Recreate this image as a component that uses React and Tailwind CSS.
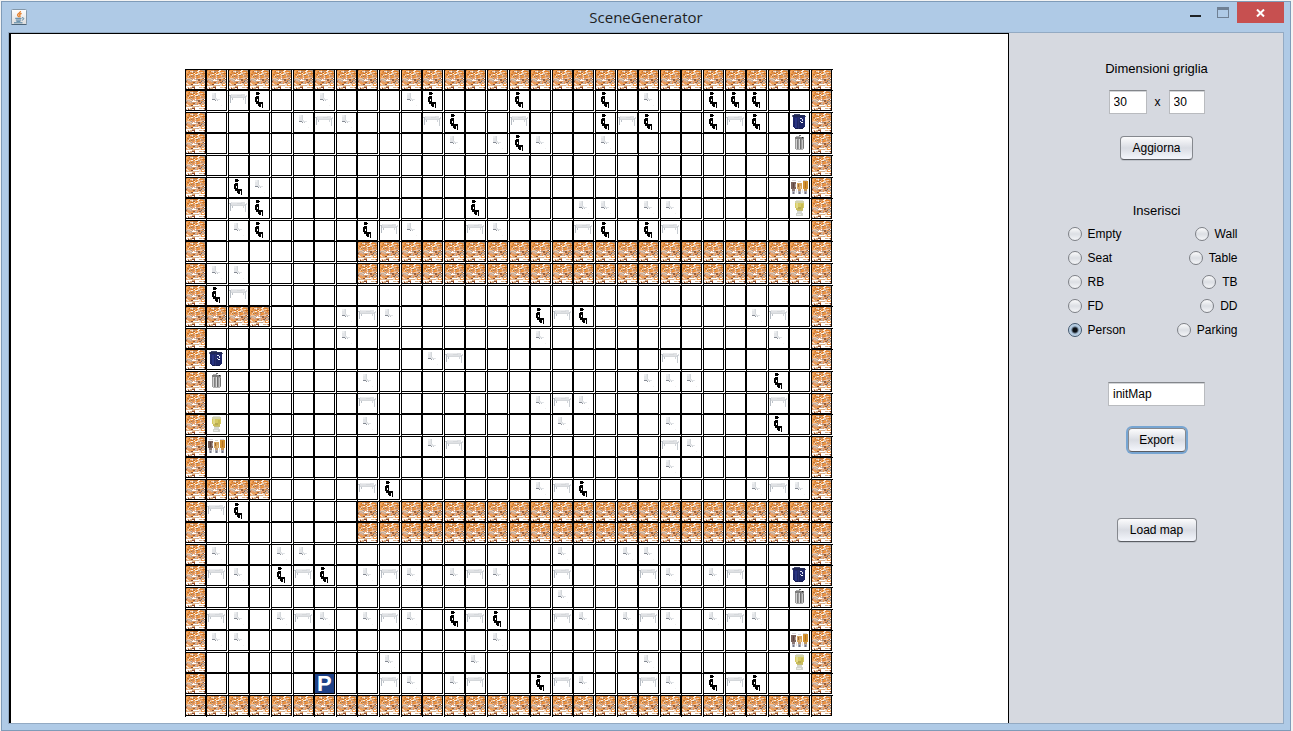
import React from "react";

const SIZE = 30;
const CELL = 21.6;

const tracks = Array.from({ length: SIZE }, (_, i) =>
  `${Math.floor((i + 1) * CELL + 0.001) - Math.floor(i * CELL + 0.001)}px`
).join(" ");

// Furniture per row: column number followed by the kind of tile.
const furniture = {
  1: "1s 2t 3p 6s 10s 11p 15p 19p 21s 24p 25p 26p",
  2: "5s 6t 7s 11t 12p 15t 19p 20t 21p 24p 25t 26p 28r",
  3: "12s 14s 15p 16s 19s 28b",
  5: "2p 3s 28f",
  6: "2t 3p 13p 18s 19s 21s 22s 28d",
  7: "2s 3p 8p 9t 10s 13t 14s 18t 19p 21p 22t",
  9: "1s 2s",
  10: "1p 2t",
  11: "7s 8t 9s 16p 17t 18p 26s 27t",
  12: "7s 16s 27s",
  13: "1r 11s 12t 22t",
  14: "1b 8s 21s 22s 23s 27p",
  15: "8t 16s 17t 18s 27t",
  16: "1d 8s 17s 22s 27p",
  17: "1f 11s 12t 22t 23s",
  18: "22s",
  19: "8t 9p 16s 17t 18p 26s 27t 28s",
  20: "1t 2p",
  22: "1s 4s 5s 17s 20s 21s",
  23: "1t 2s 4p 5t 6p 8s 9t 10s 12s 13t 14s 17t 21t 22s 24s 25t 28r",
  24: "17s 28b",
  25: "1t 2s 4s 5t 6s 8s 9t 10s 12p 13t 14p 17t 18s 20s 21t 22s 24s 25t 26s",
  26: "1s 2s 14s 28f",
  27: "9s 13s 21s 28d",
  28: "6P 9t 10s 12s 13t 16p 17t 18s 21t 22s 24p 25t 26p",
};

function isWall(row, col) {
  if (row === 0 || row === SIZE - 1 || col === 0 || col === SIZE - 1) return true;
  if ([8, 9, 20, 21].includes(row)) return col >= 8;
  if (row === 11 || row === 19) return col <= 3;
  return false;
}

const cells = [];
for (let row = 0; row < SIZE; row++) {
  const placed = {};
  (furniture[row] || "").split(" ").filter(Boolean).forEach((item) => {
    placed[parseInt(item, 10)] = item.slice(-1);
  });
  for (let col = 0; col < SIZE; col++) {
    cells.push(isWall(row, col) ? "w" : placed[col] || "");
  }
}

// Brick texture: short horizontal runs of colour from a fixed seed.
function brickPaths() {
  let state = 90210;
  const next = () => {
    state = (state + 0x6d2b79f5) | 0;
    let t = Math.imul(state ^ (state >>> 15), 1 | state);
    t = (t + Math.imul(t ^ (t >>> 7), 61 | t)) ^ t;
    return ((t ^ (t >>> 14)) >>> 0) / 4294967296;
  };
  const upper = ["#e8882f", "#f09a45", "#dd9358", "#c98a5c", "#b39a86", "#e8b48c", "#f3d3b5", "#c0722f", "#fbeee0", "#f0a868"];
  const middle = ["#e39a62", "#ee8f3c", "#c9a184", "#a89484", "#f2c9a8", "#ffffff", "#94603f", "#d8b79f", "#e9a070", "#c4b0a0"];
  const lower = ["#ee9346", "#ffffff", "#e4a477", "#d9b48f", "#fff4ea", "#8a4a32", "#f6d9be", "#f0a050", "#c9a890"];
  const groups = {};
  for (let y = 0; y < 19; y++) {
    const set = y < 8 ? upper : y < 13 ? middle : lower;
    let x = 0;
    while (x < 19) {
      const w = Math.min(19 - x, 1 + Math.floor(next() * 2.2));
      let fill = set[Math.floor(next() * set.length)];
      if (y === 16 || y === 18) fill = next() < 0.55 ? "#ffffff" : fill;
      groups[fill] = (groups[fill] || "") + `M${x} ${y}h${w}v1h-${w}z`;
      x += w;
    }
  }
  return Object.entries(groups);
}
const bricks = brickPaths();

// Each sprite is a list of [x, y, width, height, colour] blocks.
const sprites = {
  p: [
    [6, 1, 3, 3, "#000"], [9, 2, 1, 1, "#000"], [6, 5, 3, 2, "#000"], [5, 6, 2, 4, "#000"],
    [7, 7, 2, 1, "#000"], [8, 8, 1, 2, "#000"], [5, 10, 4, 1, "#000"], [6, 11, 4, 2, "#000"],
    [10, 11, 3, 1, "#000"], [8, 12, 5, 1, "#000"], [8, 13, 3, 2, "#000"], [12, 13, 1, 4, "#000"],
    [9, 15, 2, 1, "#000"],
  ],
  s: [
    [5, 2, 4, 6, "#e3e5e8"], [8, 2, 1, 6, "#d3d7da"], [5, 2, 2, 2, "#edeff0"], [6, 7, 4, 1, "#e1e3e6"],
    [5, 8, 3, 1, "#868b94"], [8, 8, 4, 1, "#dfe2e5"], [8, 9, 1, 1, "#92969d"], [10, 9, 1, 1, "#c5c9ce"],
    [12, 8, 1, 1, "#e3e5e8"], [14, 14, 1, 1, "#f0f0f0"],
  ],
  t: [
    [2, 3, 14, 3, "#dfe1e4"], [3, 3, 9, 1, "#ebecee"], [8, 4, 5, 1, "#d5d8db"], [1, 6, 16, 1, "#d4d7da"],
    [1, 4, 1, 8, "#b6bcc3"], [0, 4, 1, 1, "#c4c9ce"], [3, 7, 1, 2, "#bdc3ca"], [14, 7, 1, 2, "#d2d6db"],
    [16, 5, 1, 8, "#c8cdd2"], [17, 4, 1, 2, "#d8dade"],
  ],
  r: [
    [3, 2, 12, 2, "#202754"], [2, 2, 1, 2, "#676b86"], [15, 3, 1, 1, "#535874"], [4, 1, 6, 1, "#40466c"],
    [3, 4, 12, 4, "#20286e"], [3, 8, 12, 6, "#1c2566"], [4, 14, 10, 1, "#1c2566"], [5, 15, 8, 1, "#151c4d"],
    [5, 5, 2, 10, "#293483"], [10, 5, 2, 1, "#e4e8f4"], [12, 6, 1, 2, "#dce1f2"], [11, 9, 2, 1, "#fff"],
    [10, 8, 1, 1, "#d6dcef"], [8, 4, 1, 12, "#29316d"],
  ],
  b: [
    [5, 3, 9, 2, "#7c7c7c"], [6, 2, 4, 1, "#adadad"], [9, 1, 2, 1, "#686868"], [12, 3, 1, 1, "#222"],
    [5, 5, 9, 10, "#9a9a9a"], [6, 5, 1, 10, "#d2d2d2"], [7, 6, 1, 9, "#808080"], [9, 5, 1, 10, "#dadada"],
    [10, 5, 1, 10, "#6d6d6d"], [12, 6, 1, 9, "#c5c5c5"], [13, 6, 1, 8, "#757575"], [6, 15, 7, 1, "#b3b3b3"],
  ],
  f: [
    [2, 2, 4, 1, "#d7d4d7"], [8, 3, 3, 1, "#d6d6d6"], [13, 2, 4, 1, "#d6d4d7"],
    [1, 4, 5, 7, "#7a625c"], [2, 11, 3, 2, "#8c7875"], [3, 5, 1, 5, "#5e4743"], [5, 6, 1, 3, "#b5a29a"],
    [7, 5, 5, 6, "#d6a45e"], [8, 6, 1, 3, "#9f6938"], [10, 8, 1, 3, "#ebc285"], [8, 11, 3, 2, "#c29a70"],
    [13, 3, 5, 8, "#d39432"], [15, 4, 1, 6, "#b57226"], [14, 11, 3, 2, "#c59859"],
    [2, 13, 3, 3, "#b3b2bb"], [8, 13, 3, 3, "#a5a6b0"], [14, 13, 3, 3, "#aaa9b3"], [3, 14, 1, 2, "#747585"],
    [9, 14, 1, 2, "#717486"], [15, 14, 1, 2, "#747585"], [6, 11, 1, 4, "#e7e5e8"], [12, 11, 1, 4, "#e7e5e8"],
  ],
  d: [
    [6, 1, 7, 1, "#dfe1d7"], [5, 2, 9, 2, "#d3d3a9"], [5, 4, 9, 5, "#d5ca62"], [6, 9, 7, 2, "#cabe5b"],
    [6, 4, 2, 5, "#e2d98a"], [11, 5, 2, 4, "#c8bb52"], [8, 8, 3, 2, "#b8aa54"], [7, 11, 6, 1, "#c4bd78"],
    [7, 12, 5, 2, "#d5d7d0"], [6, 14, 7, 3, "#d2d4cd"], [7, 15, 4, 1, "#eceee9"],
  ],
};

function Tile({ kind }) {
  if (!kind) return null;
  return (
    <svg viewBox="0 0 19 19" className="block size-[19px] overflow-visible" shapeRendering="crispEdges" aria-hidden="true">
      {kind === "w" && bricks.map(([fill, d]) => <path key={fill} d={d} fill={fill} />)}
      {kind === "P" && (
        <>
          <rect width="19" height="19" fill="#1f4288" />
          <text x="2" y="17" fontFamily="Liberation Sans, sans-serif" fontWeight="700" fontSize="22" fill="#fff">P</text>
        </>
      )}
      {sprites[kind] && sprites[kind].map(([x, y, w, h, fill], i) => (
        <rect key={i} x={x} y={y} width={w} height={h} fill={fill} />
      ))}
    </svg>
  );
}

function SceneMap() {
  return (
    <div className="grid" style={{ gridTemplateColumns: tracks, gridTemplateRows: tracks }}>
      {cells.map((kind, i) => (
        <div key={i} className="border-t border-l border-black">
          <div className="size-5 border-r border-b border-black">
            <Tile kind={kind} />
          </div>
        </div>
      ))}
    </div>
  );
}

function JavaIcon() {
  return (
    <svg viewBox="0 0 16 16" className="size-4" aria-hidden="true">
      <defs>
        <linearGradient id="plate" x1="0" y1="0" x2="0" y2="1">
          <stop offset="0" stopColor="#ffffff" />
          <stop offset="1" stopColor="#dcdcdc" />
        </linearGradient>
      </defs>
      <rect x="0.5" y="0.5" width="15" height="15" rx="1" fill="url(#plate)" stroke="#8497a8" />
      <path d="M0.5 15.5h15" stroke="#4c6478" />
      <path d="M9.5 2.2C9.8 4 6.2 4.6 6.6 6.2c.2.9 1 1.2 1 2M10.6 4.4C8.8 5 8.2 5.8 8.9 6.7c.4.6.2 1.1-.4 1.5" fill="none" stroke="#e57c25" strokeWidth="1.3" />
      <path d="M4.2 9.3h6.3M4.8 11h5.2M5.4 12.3h4M3 13.8h8.5M11 8.8c2.4-.6 2.4 2-.2 2.4" fill="none" stroke="#4f7f9f" strokeWidth="1" />
    </svg>
  );
}

function PushButton({ children, className, focused }) {
  return (
    <button
      type="button"
      className={`h-6 rounded border border-[#85888e] border-b-[#5a5d63] bg-linear-to-b from-[#fcfcfd] via-[#d9dce3] to-[#f4f6fc] text-xs text-black ${
        focused ? "shadow-[0_0_0_2px_#77a5d2]" : "shadow-[0_1px_0_#bfc3ca]"
      } ${className}`}
    >
      {children}
    </button>
  );
}

function Field({ label, value, className }) {
  return (
    <input
      type="text"
      aria-label={label}
      defaultValue={value}
      className={`h-6 border border-[#b9bbbf] border-t-[#83868b] bg-white px-1 text-xs text-black shadow-[inset_0_1px_0_#d2d4d7] outline-none ${className}`}
    />
  );
}

function Choice({ label, checked }) {
  return (
    <label className="flex h-6 items-center gap-1.5 text-xs text-black">
      <input
        type="radio"
        name="tile"
        defaultChecked={checked}
        className="size-3.5 appearance-none rounded-full border border-[#7d8086] bg-linear-to-b from-[#fbfbfc] via-[#dcdfe4] to-[#f4f5f8] checked:border-[#40566d] checked:bg-[radial-gradient(circle,#0b0f14_0_2px,#a9c2da_4px,#c4d8ea_6px)]"
      />
      {label}
    </label>
  );
}

function SidePanel() {
  return (
    <aside className="flex w-[274px] shrink-0 flex-col items-center bg-[#d6d9e0] pt-7 pl-[21px]">
      <h2 className="h-4 text-[13px] leading-4">Dimensioni griglia</h2>
      <div className="mt-[13px] flex items-center text-xs">
        <Field label="Righe" value="30" className="w-[38px]" />
        <span className="px-2">x</span>
        <Field label="Colonne" value="30" className="w-9" />
      </div>
      <PushButton className="mt-[22px] w-[73px]">Aggiorna</PushButton>
      <h2 className="mt-[43px] h-4 text-[13px] leading-4">Inserisci</h2>
      <div className="mt-[3px] flex w-[178px] justify-between pr-2">
        <div className="flex flex-col items-start">
          <Choice label="Empty" />
          <Choice label="Seat" />
          <Choice label="RB" />
          <Choice label="FD" />
          <Choice label="Person" checked />
        </div>
        <div className="flex flex-col items-end">
          <Choice label="Wall" />
          <Choice label="Table" />
          <Choice label="TB" />
          <Choice label="DD" />
          <Choice label="Parking" />
        </div>
      </div>
      <Field label="Nome mappa" value="initMap" className="mt-10 w-[97px]" />
      <PushButton focused className="mt-[22px] w-[58px]">Export</PushButton>
      <PushButton className="mt-[66px] w-20">Load map</PushButton>
    </aside>
  );
}

export default function App() {
  return (
    <div className="flex min-h-screen bg-[#f3f3f3] pt-px pr-0.5 pl-px font-['Liberation_Sans',Arial,sans-serif] text-black">
      <div className="flex grow flex-col border border-[#7f9bb8] bg-[#afcae6] px-1.5 pb-1.5">
        <header className="grid h-[30px] grid-cols-[1fr_auto_1fr]">
          <div className="flex items-start pt-[7px] pl-[3px]">
            <JavaIcon />
          </div>
          <h1 className="pt-[3px] font-['Open_Sans',sans-serif] text-[15px] leading-6 text-[#1e1e1e]">SceneGenerator</h1>
          <div className="flex items-start justify-end">
            <button type="button" aria-label="Minimize" className="flex h-5 w-7 items-start justify-center pt-[13px]">
              <span className="h-0.5 w-[11px] bg-[#1e2226]" />
            </button>
            <button type="button" aria-label="Maximize" className="flex h-5 w-7 items-start justify-center pt-[5px]">
              <span className="h-[11px] w-3 border border-t-[3px] border-[#6f8094]" />
            </button>
            <button type="button" aria-label="Close" className="flex h-[21px] w-[47px] items-center justify-center bg-[#c75050]">
              <svg viewBox="0 0 9 8" className="h-2 w-[9px]" aria-hidden="true">
                <path d="M1 .5l7 7M8 .5l-7 7" stroke="#fff" strokeWidth="2" />
              </svg>
            </button>
          </div>
        </header>
        <div className="flex grow border border-[#93aac3]">
          <main className="flex grow justify-center border-t border-r border-l-2 border-black bg-white pt-[35px] pr-0.5 pb-1.5">
            <SceneMap />
          </main>
          <SidePanel />
        </div>
      </div>
    </div>
  );
}
